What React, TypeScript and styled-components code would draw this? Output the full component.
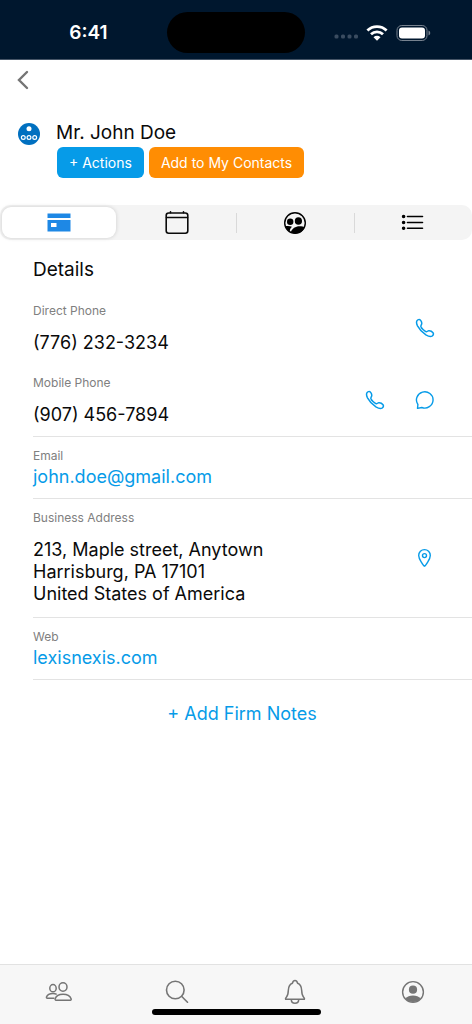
import React from 'react';
import styled, { createGlobalStyle } from 'styled-components';

const GlobalStyle = createGlobalStyle`
  * { box-sizing: border-box; }
  body { margin: 0; background: #fff; }
  button, a { font-family: inherit; }
`;

const color = {
  navy: '#00172e',
  link: '#069be8',
  grey: '#808080',
  line: '#e3e3e3',
};

const Screen = styled.div`
  display: flex;
  flex-direction: column;
  min-height: 100vh;
  background: #fff;
  color: #0a0a0a;
  font-family: Inter, 'Liberation Sans', sans-serif;
`;

const StatusBar = styled.header`
  display: grid;
  grid-template-columns: 1fr auto 1fr;
  align-items: center;
  height: 60px;
  padding-top: 6px;
  border-bottom: 1px solid #465567;
  background: ${color.navy};
`;

const Clock = styled.time`
  justify-self: center;
  padding-left: 10px;
  color: #fff;
  font-size: 19px;
  font-weight: 600;
  line-height: 24px;
`;

const Island = styled.div`
  width: 138px;
  height: 41px;
  border-radius: 21px;
  background: #000;
`;

const StatusIcons = styled.div`
  display: flex;
  align-items: center;
  justify-content: flex-end;
  gap: 8px;
  padding-right: 40px;
`;

const Main = styled.main`
  flex: 1;
`;

const BackButton = styled.button`
  display: block;
  margin: 8px 0 0 11px;
  width: 24px;
  height: 24px;
  padding: 0;
  border: 0;
  background: none;
`;

const Profile = styled.section`
  display: flex;
  gap: 16px;
  padding: 28px 18px 0;
`;

const Avatar = styled.svg`
  flex: none;
  margin-top: 3px;
`;

const Name = styled.h1`
  margin: 0;
  font-size: 19px;
  font-weight: 400;
  line-height: 26px;
`;

const Actions = styled.div`
  display: flex;
  gap: 5px;
  padding: 1px 0 0 1px;
`;

const ActionButton = styled.button<{ $fill: string }>`
  height: 31px;
  padding: 0 12px;
  border: 0;
  border-radius: 6px;
  background: ${(p) => p.$fill};
  color: #fff;
  font-size: 14px;
  font-weight: 400;
  white-space: nowrap;
`;

const Tabs = styled.nav`
  display: flex;
  height: 35px;
  margin-top: 27px;
  border-radius: 10px;
  background: #f4f4f4;
`;

const TabSlot = styled.div<{ $divided?: boolean }>`
  display: flex;
  flex: 1;
  align-items: center;
  padding: 2px;

  &::before {
    content: '';
    width: 1px;
    height: 20px;
    margin-left: -2px;
    margin-right: 1px;
    background: ${(p) => (p.$divided ? '#d9d9d9' : 'transparent')};
  }
`;

const Tab = styled.button<{ $active?: boolean }>`
  display: flex;
  flex: 1;
  align-items: center;
  justify-content: center;
  height: 31px;
  padding: 0;
  border: 0;
  border-radius: 9px;
  background: ${(p) => (p.$active ? '#fff' : 'transparent')};
  box-shadow: ${(p) => (p.$active ? '0 0 4px rgba(0, 0, 0, 0.16)' : 'none')};
`;

const Details = styled.section`
  padding: 17px 0 0 33px;
`;

const Heading = styled.h2`
  margin: 0 0 9px;
  font-size: 19px;
  font-weight: 400;
  line-height: 26px;
`;

const Row = styled.div<{ $plain?: boolean }>`
  display: flex;
  align-items: center;
  justify-content: space-between;
  padding-right: 32px;
  border-bottom: ${(p) => (p.$plain ? '0' : `1px solid ${color.line}`)};
`;

const Field = styled.div<{ $loose?: boolean; $tall?: boolean }>`
  display: flex;
  flex-direction: column;
  gap: ${(p) => (p.$loose ? 13 : 2)}px;
  padding: 11px 0 ${(p) => (p.$tall ? 12 : 10)}px;
`;

const Label = styled.span`
  color: ${color.grey};
  font-size: 12px;
  line-height: 16px;
`;

const Value = styled.span`
  font-size: 18px;
  line-height: 22px;
`;

const ValueLink = styled.a`
  color: ${color.link};
  font-size: 18px;
  line-height: 22px;
  text-decoration: none;
`;

const RowActions = styled.div`
  display: flex;
  gap: 20px;
`;

const IconButton = styled.button`
  display: flex;
  align-items: center;
  justify-content: center;
  width: 30px;
  height: 30px;
  padding: 0;
  border: 0;
  background: none;
  color: ${color.link};
`;

const AddNotes = styled.button`
  display: block;
  margin: 22px auto 0;
  padding: 0 0 0 12px;
  border: 0;
  background: none;
  color: ${color.link};
  font-size: 18px;
  line-height: 24px;
`;

const BottomBar = styled.footer`
  height: 60px;
  border-top: 1px solid #e2e2e2;
  background: #f7f7f7;
  color: #757575;
`;

const BottomNav = styled.nav`
  display: flex;
  padding-top: 11px;
`;

const NavButton = styled.button`
  display: flex;
  flex: 1;
  align-items: center;
  justify-content: center;
  height: 32px;
  padding: 0;
  border: 0;
  background: none;
  color: inherit;
`;

const HomeIndicator = styled.div`
  width: 169px;
  height: 6px;
  margin: 1px auto 0;
  border-radius: 3px;
  background: #000;
`;

const PhoneIcon = () => (
  <svg width="20" height="20" viewBox="0 0 20 20" fill="none" stroke="currentColor" strokeWidth="1.5" strokeLinejoin="round">
    <path d="M1.900 2.900C2.700 1.600 4.300 1.100 5.300 2C6.300 3 6.900 4.600 6.700 5.800C6.600 6.800 5.700 7.400 5.900 8.500C6.400 10.300 9.300 13.200 11.200 13.700C12.200 13.900 12.700 12.800 13.800 12.700C15.200 12.600 17.200 13.600 18 14.700C18.700 15.800 18.200 17.300 17 18.100C15.400 18.900 13.200 18.200 10.900 16.800C7.600 14.600 4.300 11.200 2.500 7.800C1.500 5.800 1.200 4.200 1.900 2.900Z" />
  </svg>
);

const ChatIcon = () => (
  <svg width="20" height="20" viewBox="0 0 20 20" fill="none" stroke="currentColor" strokeWidth="1.4" strokeLinejoin="round">
    <path d="M2.500 18.400L2.900 14.500A8.300 8.100 0 1 1 6.800 17.500Z" />
  </svg>
);

const PinIcon = () => (
  <svg width="20" height="20" viewBox="0 0 20 20" fill="none" stroke="currentColor" strokeWidth="1.4" strokeLinejoin="round">
    <path d="M9.500 18.200C8.700 17.800 3.700 11.200 3.700 7.400A5.800 5.800 0 0 1 15.300 7.400C15.300 11.200 10.300 17.800 9.500 18.200Z" />
    <circle cx="9.500" cy="7.600" r="2" />
  </svg>
);

const tabs = [
  {
    name: 'Details',
    icon: (
      <svg width="24" height="20" viewBox="0 0 24 20" fill="#1e88e5">
        <path d="M.5 .5h23v4.500H.5z" />
        <path fillRule="evenodd" d="M.5 7h23v11.500H.5zM4 10v4h5.500v-4z" />
      </svg>
    ),
  },
  {
    name: 'Calendar',
    icon: (
      <svg width="24" height="26" viewBox="0 0 24 26" fill="none" stroke="#0a0a0a" strokeWidth="1.6" strokeLinecap="round">
        <rect x="1.200" y="3" width="21.600" height="20.200" rx="2.5" />
        <path d="M1.500 7.500h21M5.500 1.700v1M18.500 1.700v1" />
      </svg>
    ),
  },
  {
    name: 'Relationships',
    icon: (
      <svg width="24" height="24" viewBox="0 0 24 24">
        <circle cx="12" cy="12" r="10.300" fill="none" stroke="#000" strokeWidth="1.400" />
        <circle cx="7.200" cy="10.700" r="3.200" />
        <ellipse cx="15.400" cy="10" rx="3.600" ry="3.800" />
        <path d="M2 15.300C4.400 14.600 7 14.800 9 15.700C7.600 16.900 6.800 18.200 6.700 20.400C4.500 19.300 2.800 17.600 2 15.300Z" />
        <path d="M7.800 21.200C9 17.500 12.500 15.300 16.500 15.300C18.700 15.300 20.500 15.600 21.800 16.200C19.800 21.400 13.700 24.200 7.800 21.200Z" />
      </svg>
    ),
  },
  {
    name: 'List',
    icon: (
      <svg width="24" height="20" viewBox="0 0 24 20" stroke="#000" strokeWidth="1.600" strokeLinecap="round">
        <path d="M6.500 3.500h15M6.500 9.500h15M6.500 15.200h15" />
        <circle cx="2.600" cy="3.500" r="1" />
        <circle cx="2.600" cy="9.500" r="1" />
        <circle cx="2.600" cy="15.200" r="1" />
      </svg>
    ),
  },
];

const navItems = [
  {
    name: 'Contacts',
    icon: (
      <svg width="28" height="24" viewBox="0 0 28 24" fill="none" stroke="currentColor" strokeWidth="1.500" strokeLinejoin="round">
        <ellipse cx="8" cy="8.200" rx="3.200" ry="3.600" />
        <ellipse cx="18" cy="7" rx="4" ry="4.200" />
        <path d="M9.500 18.200H2.300C1.600 18.200 1.300 17.600 1.500 16.900C2.300 14.700 4.900 13.500 8 13.500C9.400 13.500 10.700 13.800 11.700 14.300" />
        <path d="M11 20.200H25.300C26.100 20.200 26.400 19.500 26.100 18.700C25.100 16 22 14.300 18 14.300S11.100 16 10.200 18.700C9.900 19.500 10.300 20.200 11 20.200Z" />
      </svg>
    ),
  },
  {
    name: 'Search',
    icon: (
      <svg width="24" height="24" viewBox="0 0 24 24" fill="none" stroke="currentColor" strokeWidth="1.600" strokeLinecap="round">
        <circle cx="10.300" cy="10" r="8.800" />
        <path d="M16.800 16.500L22.500 22.200" />
      </svg>
    ),
  },
  {
    name: 'Notifications',
    icon: (
      <svg width="24" height="26" viewBox="0 0 24 26" fill="none" stroke="currentColor" strokeWidth="1.500" strokeLinejoin="round">
        <path d="M2.600 20.300C2.200 19.700 2.600 18.900 3.500 17.900C4.900 16.400 5.200 14.500 5.300 11.500C5.500 7.500 6.700 5.200 9.400 4.300C9.900 2.500 10.700 1.600 12 1.600S14.100 2.500 14.600 4.300C17.300 5.200 18.500 7.500 18.700 11.500C18.800 14.500 19.100 16.400 20.500 17.900C21.400 18.900 21.800 19.700 21.400 20.300Z" />
        <path d="M8.300 20.500C8.300 23 9.900 24.300 12 24.300S15.700 23 15.700 20.500" />
      </svg>
    ),
  },
  {
    name: 'Account',
    icon: (
      <svg width="24" height="24" viewBox="0 0 24 24" fill="currentColor">
        <circle cx="12" cy="12" r="10.400" fill="none" stroke="currentColor" strokeWidth="1.400" />
        <circle cx="12" cy="9.700" r="4.100" />
        <path d="M4.500 18.700C6 16.600 8.800 15.500 12 15.500S18 16.600 19.500 18.700A10.400 10.400 0 0 1 4.500 18.700Z" />
      </svg>
    ),
  },
];

export default function App() {
  return (
    <Screen>
      <GlobalStyle />
      <StatusBar>
        <Clock>6:41</Clock>
        <Island />
        <StatusIcons>
          <svg width="26" height="12" viewBox="0 0 26 12" fill="#3a4c60">
            <rect x="2.500" y="7.500" width="4" height="4" rx="1.500" />
            <rect x="9" y="7.500" width="4" height="4" rx="1.500" />
            <rect x="15.500" y="7.500" width="4" height="4" rx="1.500" />
            <rect x="22" y="7.500" width="4" height="4" rx="1.500" />
          </svg>
          <svg width="22" height="16" viewBox="0 0 22 16" fill="none" stroke="#fff" strokeWidth="2.800">
            <path d="M1.400 5.500A13.800 13.800 0 0 1 20.600 5.500" />
            <path d="M5 9.300A8.700 8.700 0 0 1 17 9.300" />
            <path d="M7.500 12.200A5 5 0 0 1 14.500 12.200L11 15.800Z" fill="#fff" stroke="none" />
          </svg>
          <svg width="36" height="16" viewBox="0 0 36 16">
            <rect x="1" y="0.500" width="30" height="15" rx="4.800" fill="none" stroke="#77828f" />
            <rect x="3" y="2.500" width="26" height="11" rx="3" fill="#fff" />
            <path d="M32.500 5.500C34.800 6.300 34.800 9.700 32.500 10.500Z" fill="#77828f" />
          </svg>
        </StatusIcons>
      </StatusBar>

      <Main>
        <BackButton aria-label="Back">
          <svg width="24" height="24" viewBox="0 0 24 24" fill="none" stroke="#757575" strokeWidth="2.400" strokeLinecap="round">
            <path d="M16 4L8 12L16 20" />
          </svg>
        </BackButton>

        <Profile>
          <Avatar width="22" height="22" viewBox="0 0 22 22">
            <circle cx="11" cy="11" r="11" fill="#0070c0" />
            <circle cx="11" cy="5.700" r="2.500" fill="#fff" />
            <g fill="none" stroke="#fff" strokeWidth="1.200">
              <circle cx="5.300" cy="14.500" r="1.900" />
              <circle cx="11" cy="14.500" r="1.900" />
              <circle cx="16.700" cy="14.500" r="1.900" />
            </g>
          </Avatar>
          <div>
            <Name>Mr. John Doe</Name>
            <Actions>
              <ActionButton $fill="#069be8">+ Actions</ActionButton>
              <ActionButton $fill="#ff8d03">Add to My Contacts</ActionButton>
            </Actions>
          </div>
        </Profile>

        <Tabs aria-label="Contact sections">
          {tabs.map((tab, i) => (
            <TabSlot key={tab.name} $divided={i > 1}>
              <Tab $active={i === 0} aria-label={tab.name}>
                {tab.icon}
              </Tab>
            </TabSlot>
          ))}
        </Tabs>

        <Details>
          <Heading>Details</Heading>
          <Row $plain>
            <Field $loose>
              <Label>Direct Phone</Label>
              <Value>(776) 232-3234</Value>
            </Field>
            <RowActions>
              <IconButton aria-label="Call direct phone"><PhoneIcon /></IconButton>
            </RowActions>
          </Row>
          <Row>
            <Field $loose>
              <Label>Mobile Phone</Label>
              <Value>(907) 456-7894</Value>
            </Field>
            <RowActions>
              <IconButton aria-label="Call mobile phone"><PhoneIcon /></IconButton>
              <IconButton aria-label="Send message"><ChatIcon /></IconButton>
            </RowActions>
          </Row>
          <Row>
            <Field>
              <Label>Email</Label>
              <ValueLink href="mailto:john.doe@gmail.com">john.doe@gmail.com</ValueLink>
            </Field>
          </Row>
          <Row>
            <Field $loose $tall>
              <Label>Business Address</Label>
              <Value>
                213, Maple street, Anytown
                <br />
                Harrisburg, PA 17101
                <br />
                United States of America
              </Value>
            </Field>
            <RowActions>
              <IconButton aria-label="Show on map"><PinIcon /></IconButton>
            </RowActions>
          </Row>
          <Row>
            <Field>
              <Label>Web</Label>
              <ValueLink href="#web">lexisnexis.com</ValueLink>
            </Field>
          </Row>
        </Details>
        <AddNotes>+ Add Firm Notes</AddNotes>
      </Main>

      <BottomBar>
        <BottomNav aria-label="Main">
          {navItems.map((item) => (
            <NavButton key={item.name} aria-label={item.name}>
              {item.icon}
            </NavButton>
          ))}
        </BottomNav>
        <HomeIndicator />
      </BottomBar>
    </Screen>
  );
}
